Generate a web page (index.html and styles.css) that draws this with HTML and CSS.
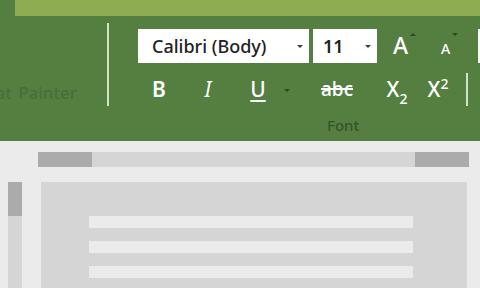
FILE: index.html
```html
<!DOCTYPE html>
<html>
<head>
<meta charset="utf-8">
<link rel="stylesheet" href="styles.css">
</head>
<body>
<div class="ribbon">
  <div class="topbar"></div>
  <div class="groups">
    <div class="clip"><span class="painter">Format Painter</span></div>
    <div class="sep1"></div>
    <div class="fontgroup">
      <div class="row1">
        <div class="combo name"><span class="val">Calibri (Body)</span><span class="dd"></span></div>
        <div class="combo size"><span class="val">11</span><span class="dd"></span></div>
        <div class="grow"><span class="bigA">A</span><span class="tri up"></span></div>
        <div class="shrink"><span class="smallA">A</span><span class="tri down"></span></div>
        <div class="nextbox"></div>
      </div>
      <div class="row2">
        <div class="btn b">B</div>
        <div class="btn i">I</div>
        <div class="btn u"><span class="uline">U</span></div>
        <div class="btn udd"><span class="tri down"></span></div>
        <div class="btn abc">abc</div>
        <div class="btn sub">X<span class="s2">2</span></div>
        <div class="btn sup">X<span class="p2">2</span></div>
        <div class="sep2"></div>
      </div>
      <div class="label">Font</div>
    </div>
  </div>
</div>
<div class="doc">
  <div class="hscroll">
    <div class="hthumb"></div>
    <div class="htrack"></div>
    <div class="hthumb"></div>
  </div>
  <div class="body">
    <div class="vscroll"><div class="vthumb"></div></div>
    <div class="page">
      <div class="line"></div>
      <div class="line"></div>
      <div class="line"></div>
    </div>
  </div>
</div>
</body>
</html>
```
FILE: styles.css
```css
* { box-sizing: border-box; }
html, body { margin: 0; padding: 0; }
body {
  width: 480px;
  height: 288px;
  overflow: hidden;
  background: #ebebeb;
  font-family: "Noto Sans", "Open Sans", sans-serif;
}
.ribbon {
  height: 141px;
  background: #547f40;
  display: flex;
  flex-direction: column;
}
.topbar {
  height: 16px;
  margin-left: 15px;
  background: #8dad50;
  flex: none;
}
.groups {
  display: flex;
  flex: 1;
}
.clip {
  width: 107px;
  flex: none;
  display: flex;
  justify-content: flex-end;
  padding-right: 30px;
  padding-top: 65px;
  overflow: hidden;
}
.painter {
  white-space: nowrap;
  font-size: 17px;
  word-spacing: 2px;
  font-weight: 500;
  color: #46703a;
  line-height: 24px;
  height: 24px;
}
.sep1 {
  width: 2px;
  height: 83px;
  margin-top: 7px;
  background: #d3e3c6;
  flex: none;
}
.fontgroup {
  padding-left: 29px;
  display: flex;
  flex-direction: column;
  flex: 1;
}
.row1 {
  margin-top: 13px;
  height: 34px;
  display: flex;
  align-items: stretch;
}
.combo {
  background: #fff;
  display: flex;
  align-items: center;
  color: #222;
  font-size: 18px;
  font-weight: 500;
}
.combo .val { line-height: 24px; }
.combo .dd {
  margin-left: auto;
  width: 0; height: 0;
  border-left: 3px solid transparent;
  border-right: 3px solid transparent;
  border-top: 3px solid #3a3a3a;
}
.name { width: 171px; padding-left: 14px; padding-right: 6px; }
.size { width: 64px; margin-left: 4px; padding-left: 10px; padding-right: 6px; }
.size .val { font-weight: 600; }
.grow {
  width: 50px;
  padding-left: 16px;
  display: flex;
  align-items: center;
  color: #fff;
}
.bigA { font-size: 23px; font-weight: 500; line-height: 24px; margin-top: -2px; }
.shrink {
  width: 38px;
  padding-left: 14px;
  display: flex;
  align-items: center;
  color: #fff;
}
.smallA { font-size: 14px; font-weight: 500; line-height: 18px; margin-top: 6px; }
.tri {
  width: 0; height: 0;
  border-left: 3px solid transparent;
  border-right: 3px solid transparent;
  align-self: flex-start;
  margin-top: 4px;
  margin-left: 2px;
}
.tri.up { border-bottom: 3px solid #2c4a22; }
.tri.down { border-top: 3px solid #2c4a22; }
.nextbox {
  width: 10px;
  margin-left: 13px;
  background: #fff;
}
.row2 {
  margin-top: 9px;
  height: 34px;
  display: flex;
  align-items: center;
}
.btn {
  color: #fff;
  font-size: 21px;
  font-weight: 500;
  text-align: center;
  line-height: 28px;
  height: 28px;
  flex: none;
}
.b { width: 42px; font-weight: 600; }
.i { width: 56px; font-style: italic; font-weight: 400; }
.u { width: 44px; }
.uline { text-decoration: underline; text-decoration-thickness: 2px; text-underline-offset: 3px; }
.udd { width: 14px; display: flex; justify-content: center; align-items: center; }
.udd .tri { align-self: center; margin: 2px 0 0 0; }
.abc { width: 86px; font-size: 19px; text-decoration: line-through; text-decoration-thickness: 2px; }
.sub { width: 34px; }
.s2 { font-size: 14px; vertical-align: -7px; line-height: 0; }
.sup { width: 48px; }
.p2 { font-size: 14px; vertical-align: 8px; line-height: 0; }
.sep2 {
  width: 2px;
  height: 33px;
  margin-left: 4px;
  background: #d3e3c6;
}
.label {
  margin-top: 8px;
  padding-left: 189px;
  font-size: 15px;
  font-weight: 500;
  color: #36532a;
  line-height: 22px;
}
.doc {
  padding-top: 11px;
}
.hscroll {
  margin-left: 38px;
  width: 431px;
  height: 15px;
  display: flex;
}
.hthumb { width: 54px; background: #ababab; }
.htrack { flex: 1; background: #d5d5d5; }
.body {
  display: flex;
  margin-top: 15px;
  padding-left: 8px;
}
.vscroll {
  width: 14px;
  height: 106px;
  background: #d5d5d5;
}
.vthumb { height: 34px; background: #ababab; }
.page {
  margin-left: 19px;
  width: 426px;
  height: 106px;
  background: #d5d5d5;
  padding-top: 34px;
  padding-left: 48px;
}
.line {
  width: 324px;
  height: 12px;
  background: #ebebeb;
  margin-bottom: 13px;
}
```
